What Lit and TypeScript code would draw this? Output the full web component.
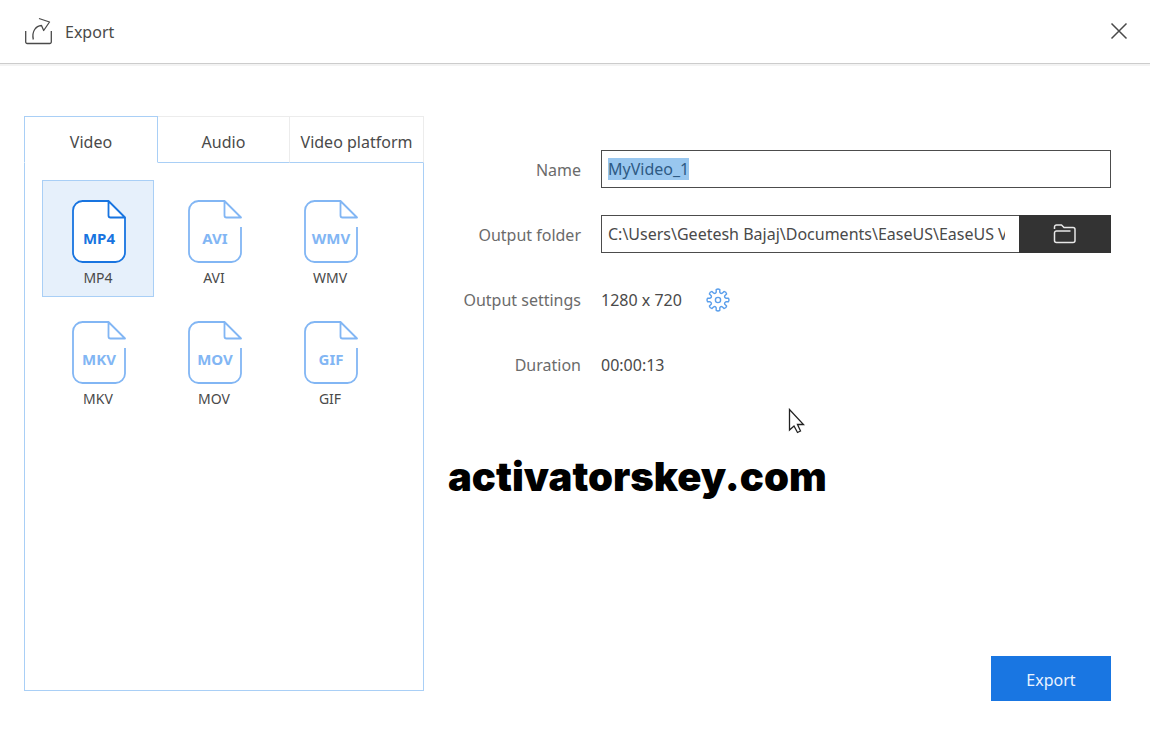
import { LitElement, html, css, svg, nothing } from "lit";
import { customElement, property, state, query } from "lit/decorators.js";
import { classMap } from "lit/directives/class-map.js";

@customElement("format-icon")
class FormatIcon extends LitElement {
  @property() label = "";
  @property({ type: Boolean }) active = false;

  static styles = css`
    :host {
      display: block;
      color: #82b6f4;
    }
    :host([active]) {
      color: #1874e0;
    }
    .icon {
      display: block;
      fill: none;
      stroke: currentColor;
      stroke-width: 1.8;
      stroke-linejoin: round;
    }
    .sheet {
      fill: #fff;
      stroke: none;
    }
    .name {
      font: 700 15px "Noto Sans", "Open Sans", sans-serif;
      fill: currentColor;
      stroke: none;
      text-anchor: middle;
    }
  `;

  render() {
    return html`
      <svg class="icon" width="56" height="66" viewBox="0 0 56 66" aria-hidden="true">
        <path class="sheet" d="M38 2H12a9 9 0 0 0-9 9V54a9 9 0 0 0 9 9H46a9 9 0 0 0 9-9V19z" />
        <path d="M39 2H12.500a9.500 9.500 0 0 0-9.500 9.500V53.500a9.500 9.500 0 0 0 9.500 9.500H45.500a9.500 9.500 0 0 0 9.500-9.500V28" />
        <path d="M38.500 2V16.500a2 2 0 0 0 2 2H55z" />
        ${this.active ? svg`<path d="M55 18.500V28" />` : nothing}
        <text class="name" x="29" y="45">${this.label}</text>
      </svg>
    `;
  }
}

@customElement("app-root")
class AppRoot extends LitElement {
  @state() private tab = "Video";
  @state() private format = "MP4";
  @query("#name") private nameInput!: HTMLInputElement;

  private tabs = ["Video", "Audio", "Video platform"];
  private formats = ["MP4", "AVI", "WMV", "MKV", "MOV", "GIF"];

  static styles = css`
    :host {
      display: flex;
      flex-direction: column;
      box-sizing: border-box;
      min-height: 100vh;
      position: relative;
      background: #fff;
      color: #4a4a4a;
      font: 16px/24px "Noto Sans", "Open Sans", sans-serif;
    }
    * {
      box-sizing: border-box;
    }
    button,
    input {
      font: inherit;
      color: inherit;
      border-radius: 0;
      margin: 0;
    }
    button {
      padding: 0;
      border: 0;
      background: none;
      cursor: pointer;
    }
    .header {
      display: flex;
      align-items: center;
      height: 64px;
      padding: 0 22px 2px 24px;
      border-bottom: 1px solid #ccc;
      box-shadow: 0 2px 0 #f3f3f3;
    }
    .header svg,
    .close svg,
    .browse svg,
    .gear svg {
      display: block;
      fill: none;
      stroke: currentColor;
    }
    .title {
      flex: 1;
      margin: 0 0 0 12px;
      padding-top: 2px;
      font-size: 16px;
      font-weight: 400;
    }
    .main {
      flex: 1;
      display: grid;
      grid-template-columns: 400px 1fr;
      column-gap: 24px;
      padding: 52px 39px 37px 24px;
    }
    .panel {
      display: flex;
      flex-direction: column;
      margin-bottom: 10px;
    }
    .tabs {
      display: grid;
      grid-template-columns: 134px 132px 134px;
      height: 47px;
    }
    .tab {
      border: solid #ececec;
      border-width: 1px 1px 0 0;
      border-bottom: 1px solid #a9cff6;
      padding-top: 4px;
      white-space: nowrap;
    }
    .tab.on {
      border: 1px solid #a9cff6;
      border-bottom-color: transparent;
    }
    .formats {
      flex: 1;
      display: grid;
      grid-template-columns: repeat(3, 112px);
      grid-auto-rows: 117px;
      align-content: start;
      gap: 4px;
      padding: 17px;
      border: 1px solid #a9cff6;
      border-top: 0;
    }
    .format {
      display: flex;
      flex-direction: column;
      align-items: center;
      gap: 1px;
      padding-top: 18px;
      border: 1px solid transparent;
      font-size: 14px;
    }
    .format.on {
      border-color: #a9cff6;
      background: #e6f0fb;
    }
    .side {
      display: flex;
      flex-direction: column;
      padding-top: 34px;
    }
    .form {
      display: grid;
      grid-template-columns: 133px 1fr;
      grid-auto-rows: 38px;
      column-gap: 20px;
      row-gap: 27px;
      align-items: center;
    }
    .label {
      text-align: right;
      color: #6b6b6b;
      padding-top: 2px;
    }
    .value {
      display: flex;
      align-items: center;
      gap: 24px;
      padding-top: 2px;
    }
    .field {
      width: 100%;
      min-width: 0;
      height: 38px;
      padding: 0 14px 0 6px;
      border: 1px solid #4c4c4c;
      background: #fff;
      outline: none;
    }
    .field::selection {
      background: #99c7ef;
      color: #2e5a84;
    }
    .path {
      display: flex;
    }
    .path .field {
      flex: 1;
      border-right: 0;
    }
    .browse {
      display: grid;
      place-items: center;
      width: 92px;
      height: 38px;
      background: #333;
      color: #e8e8e8;
    }
    .gear {
      color: #5b9fec;
    }
    .mark {
      margin: 68px 0 0;
      font: 900 40px/52px Inter, "Liberation Sans", sans-serif;
      color: #000;
    }
    .export {
      align-self: flex-end;
      width: 120px;
      height: 45px;
      margin-top: auto;
      padding-top: 2px;
      background: #1976e2;
      color: #e9f3ff;
    }
    .pointer {
      position: absolute;
      left: 788px;
      top: 408px;
      pointer-events: none;
    }
  `;

  firstUpdated() {
    this.nameInput.focus();
    this.nameInput.select();
  }

  render() {
    return html`
      <header class="header">
        <svg width="29" height="28" viewBox="0 0 29 28" stroke-width="1.300" stroke-linejoin="round" aria-hidden="true">
          <path d="M1.700 14V25a1.500 1.500 0 0 0 1.500 1.500H25.800a1.500 1.500 0 0 0 1.500-1.500V14" />
          <path d="M15 1.500L25.500 5L19.700 13.500L17.500 8.500C12 9 7.500 14 9.300 22.500" />
        </svg>
        <h1 class="title">Export</h1>
        <button class="close" aria-label="Close">
          <svg width="18" height="18" viewBox="0 0 18 18" stroke-width="1.500"><path d="M1.500 1.500L16.500 16.500M16.500 1.500L1.500 16.500" /></svg>
        </button>
      </header>
      <main class="main">
        <section class="panel">
          <div class="tabs" role="tablist">
            ${this.tabs.map(
              (name) => html`<button
                role="tab"
                aria-selected=${this.tab === name}
                class=${classMap({ tab: true, on: this.tab === name })}
                @click=${() => (this.tab = name)}
              >${name}</button>`
            )}
          </div>
          <div class="formats" role="tabpanel">
            ${this.formats.map(
              (name) => html`<button
                aria-pressed=${this.format === name}
                class=${classMap({ format: true, on: this.format === name })}
                @click=${() => (this.format = name)}
              ><format-icon label=${name} ?active=${this.format === name}></format-icon>${name}</button>`
            )}
          </div>
        </section>
        <section class="side">
          <div class="form">
            <label class="label" for="name">Name</label>
            <input class="field" id="name" type="text" value="MyVideo_1" spellcheck="false" />
            <label class="label" for="folder">Output folder</label>
            <div class="path">
              <input class="field" id="folder" type="text" spellcheck="false" .value=${"C:\\Users\\Geetesh Bajaj\\Documents\\EaseUS\\EaseUS V"} />
              <button class="browse" aria-label="Browse">
                <svg width="24" height="20" viewBox="0 0 24 20" stroke-width="1.500" stroke-linejoin="round">
                  <path d="M1.500 5V3a2 2 0 0 1 2-2H8.500L11 3.500H20a2 2 0 0 1 2 2V16.500a2 2 0 0 1-2 2H3.500a2 2 0 0 1-2-2V9a2 2 0 0 1 2-2H17.500" />
                </svg>
              </button>
            </div>
            <span class="label">Output settings</span>
            <div class="value">
              <span>1280 x 720</span>
              <button class="gear" aria-label="Settings">
                <svg width="24" height="24" viewBox="0 0 24 24" stroke-width="1.400" stroke-linejoin="round">
                  <circle cx="12" cy="12" r="2.600" />
                  <path d=${gearPath(12, 12, 8, 11)} />
                </svg>
              </button>
            </div>
            <span class="label">Duration</span>
            <div class="value">00:00:13</div>
          </div>
          <p class="mark">activatorskey.com</p>
          <button class="export">Export</button>
        </section>
      </main>
      <svg class="pointer" width="17" height="26" viewBox="0 0 17 26" aria-hidden="true">
        <path d="M1.500 1.500V22L6 18L9.500 24.500L12.500 23L9.500 16.500H15.500z" fill="#fff" stroke="#222" stroke-width="1.300" />
      </svg>
    `;
  }
}

/** Outline of an eight-toothed gear, with rounded teeth and rounded valleys. */
function gearPath(cx: number, cy: number, inner: number, outer: number) {
  const at = (r: number, deg: number) => {
    const a = (deg * Math.PI) / 180;
    return `${(cx + r * Math.cos(a)).toFixed(2)} ${(cy + r * Math.sin(a)).toFixed(2)}`;
  };
  let d = `M${at(inner, -13)}`;
  for (let i = 0; i < 8; i++) {
    const t = i * 45;
    d += `L${at(outer - 0.5, t - 10)}Q${at(outer + 0.6, t)} ${at(outer - 0.5, t + 10)}L${at(inner, t + 13)}`;
    d += `Q${at(inner - 1.4, t + 22.5)} ${at(inner, t + 32)}`;
  }
  return d + "Z";
}
